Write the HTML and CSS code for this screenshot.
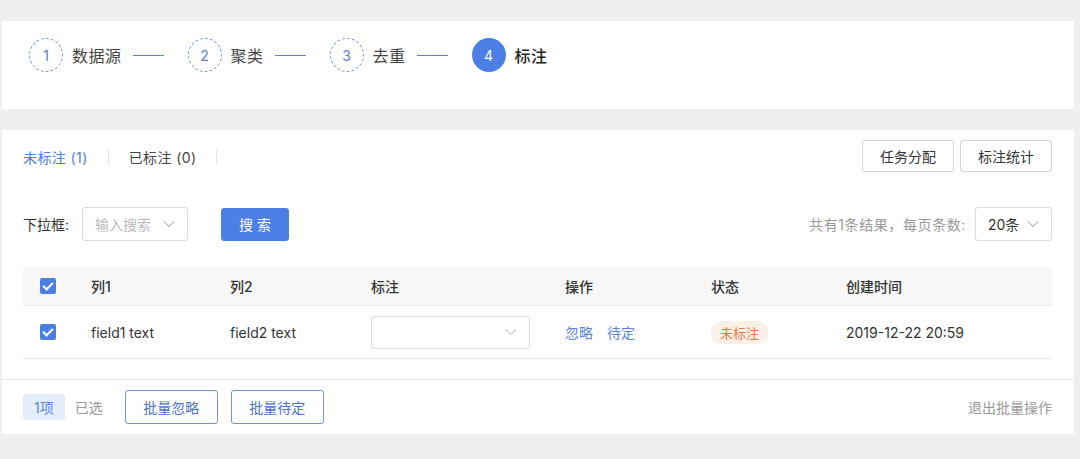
FILE: index.html
```html
<!DOCTYPE html>
<html lang="zh-CN">
<head>
    <meta charset="UTF-8">
    <title>标注</title>
    <link rel="stylesheet" href="styles.css">
</head>
<body>
    <div class="page">
        <div class="card steps">
            <div class="step">
                <span class="num">1</span><span class="label">数据源</span><span class="line"></span>
            </div>
            <div class="step">
                <span class="num">2</span><span class="label">聚类</span><span class="line"></span>
            </div>
            <div class="step">
                <span class="num">3</span><span class="label">去重</span><span class="line"></span>
            </div>
            <div class="step current">
                <span class="num">4</span><span class="label">标注</span>
            </div>
        </div>

        <div class="card panel">
            <div class="toolbar">
                <div class="tabs">
                    <span class="tab active">未标注 (1)</span>
                    <span class="sep"></span>
                    <span class="tab">已标注 (0)</span>
                    <span class="sep"></span>
                </div>
                <div class="actions">
                    <button class="btn">任务分配</button>
                    <button class="btn">标注统计</button>
                </div>
            </div>

            <div class="filters">
                <div class="filter-left">
                    <span class="field-label">下拉框:</span>
                    <div class="select small">
                        <span class="placeholder">输入搜索</span>
                        <svg class="arrow" width="12" height="8" viewBox="0 0 12 8"><path d="M1 1.5 6 6.5 11 1.5" fill="none" stroke="#bbb" stroke-width="1.2"/></svg>
                    </div>
                    <button class="btn primary">搜 索</button>
                </div>
                <div class="filter-right">
                    <span class="muted total">共有1条结果，每页条数:</span>
                    <div class="select page-size">
                        <span>20条</span>
                        <svg class="arrow" width="12" height="8" viewBox="0 0 12 8"><path d="M1 1.5 6 6.5 11 1.5" fill="none" stroke="#bbb" stroke-width="1.2"/></svg>
                    </div>
                </div>
            </div>

            <div class="table">
                <div class="row head">
                    <div class="cell check"><span class="checkbox"></span></div>
                    <div class="cell">列1</div>
                    <div class="cell">列2</div>
                    <div class="cell">标注</div>
                    <div class="cell">操作</div>
                    <div class="cell">状态</div>
                    <div class="cell">创建时间</div>
                </div>
                <div class="row body">
                    <div class="cell check"><span class="checkbox"></span></div>
                    <div class="cell">field1 text</div>
                    <div class="cell">field2 text</div>
                    <div class="cell">
                        <div class="select mark">
                            <span></span>
                            <svg class="arrow" width="12" height="8" viewBox="0 0 12 8"><path d="M1 1.5 6 6.5 11 1.5" fill="none" stroke="#ccc" stroke-width="1.2"/></svg>
                        </div>
                    </div>
                    <div class="cell links"><a>忽略</a><a>待定</a></div>
                    <div class="cell"><span class="tag">未标注</span></div>
                    <div class="cell">2019-12-22 20:59</div>
                </div>
            </div>

            <div class="footer">
                <div class="footer-left">
                    <span class="count">1项</span>
                    <span class="muted">已选</span>
                    <button class="btn outline">批量忽略</button>
                    <button class="btn outline">批量待定</button>
                </div>
                <span class="muted">退出批量操作</span>
            </div>
        </div>
    </div>
</body>
</html>
```

FILE: styles.css
```css
body {
    margin: 0;
    background: #efefef;
    font-family: Inter, "Noto Sans CJK SC", sans-serif;
    font-size: 14px;
    color: #333;
}
.page {
    padding: 21px 6px 25px 2px;
}
.card {
    background: #fff;
}
.steps {
    height: 88px;
    box-sizing: border-box;
    padding: 17px 0 0 27px;
    display: flex;
    align-items: flex-start;
}
.step {
    display: flex;
    align-items: center;
    height: 34px;
}
.step .num {
    width: 34px;
    height: 34px;
    box-sizing: border-box;
    border: 1px dashed #7d9ad0;
    border-radius: 50%;
    display: flex;
    align-items: center;
    justify-content: center;
    color: #5b82cc;
    font-size: 14px;
}
.step .label {
    margin-left: 9px;
    font-size: 16px;
    letter-spacing: 0.5px;
    color: #444;
}
.step .line {
    width: 31px;
    height: 1px;
    background: #5b82d8;
    margin: 0 24px 0 11px;
}
.step.current .num {
    background: #4c7fe6;
    border: none;
    color: #fff;
}
.step.current .label {
    color: #222;
    font-weight: 500;
}
.panel {
    margin-top: 21px;
    padding: 10px 22px 0 21px;
}
.toolbar {
    display: flex;
    justify-content: space-between;
    align-items: center;
    height: 32px;
}
.tabs {
    display: flex;
    align-items: center;
    margin-top: 2px;
}
.tab {
    color: #444;
    letter-spacing: 0.4px;
}
.tab.active {
    color: #4a7fd9;
}
.sep {
    width: 1px;
    height: 15px;
    background: #e4e4e4;
    margin: 0 20px;
}
.actions {
    display: flex;
    gap: 6px;
}
.btn {
    font-family: inherit;
    font-size: 14px;
    height: 32px;
    padding: 0;
    border: 1px solid #d4d4d4;
    border-radius: 3px;
    background: #fff;
    color: #333;
    width: 92px;
}
.btn.primary {
    background: #4c7fe6;
    border-color: #4c7fe6;
    color: #fff;
    width: 68px;
    height: 33px;
    margin-left: 33px;
}
.btn.outline {
    border-color: #7593cf;
    color: #4c74c2;
    height: 34px;
    width: 93px;
}
.filters {
    display: flex;
    justify-content: space-between;
    align-items: center;
    margin-top: 35px;
    height: 34px;
}
.filter-left, .filter-right {
    display: flex;
    align-items: center;
}
.field-label {
    color: #333;
    width: 59px;
}
.select {
    height: 34px;
    box-sizing: border-box;
    border: 1px solid #d9d9d9;
    border-radius: 3px;
    display: flex;
    align-items: center;
    justify-content: space-between;
    padding: 0 12px;
}
.select.small {
    width: 106px;
}
.placeholder {
    color: #bbb;
}
.select.page-size {
    width: 77px;
    margin-left: 9px;
}
.select.mark {
    width: 159px;
    height: 33px;
    padding: 0 12px;
}
.muted {
    color: #999;
}
.total {
    letter-spacing: 0.6px;
}
.table {
    margin-top: 26px;
}
.row {
    display: grid;
    grid-template-columns: 68px 139px 141px 194px 146px 135px 1fr;
    align-items: center;
    border-bottom: 1px solid #eaeaea;
}
.row.head {
    background: #f7f7f7;
    height: 38px;
    font-weight: 500;
    color: #333;
}
.row.body {
    height: 52px;
}
.cell.check {
    padding-left: 17px;
    display: flex;
}
.checkbox {
    width: 16px;
    height: 16px;
    border-radius: 2px;
    background: #4c7fe6;
    position: relative;
}
.checkbox::after {
    content: "";
    position: absolute;
    left: 5px;
    top: 2px;
    width: 4px;
    height: 8px;
    border: solid #fff;
    border-width: 0 2px 2px 0;
    transform: rotate(45deg);
}
.links a {
    color: #5a86d6;
    margin-right: 14px;
}
.tag {
    display: inline-block;
    background: #fcefe6;
    color: #df7a48;
    font-size: 13px;
    padding: 2px 9px;
    border-radius: 10px;
}
.footer {
    margin: 20px -22px 0 -21px;
    padding: 10px 22px 10px 21px;
    border-top: 1px solid #e8e8e8;
    display: flex;
    justify-content: space-between;
    align-items: center;
}
.footer-left {
    display: flex;
    align-items: center;
}
.count {
    background: #e3edfb;
    color: #5a86d6;
    border-radius: 3px;
    padding: 3px 11px;
    margin-right: 10px;
}
.footer-left .muted {
    margin-right: 22px;
}
.footer-left .btn + .btn {
    margin-left: 13px;
}
```
